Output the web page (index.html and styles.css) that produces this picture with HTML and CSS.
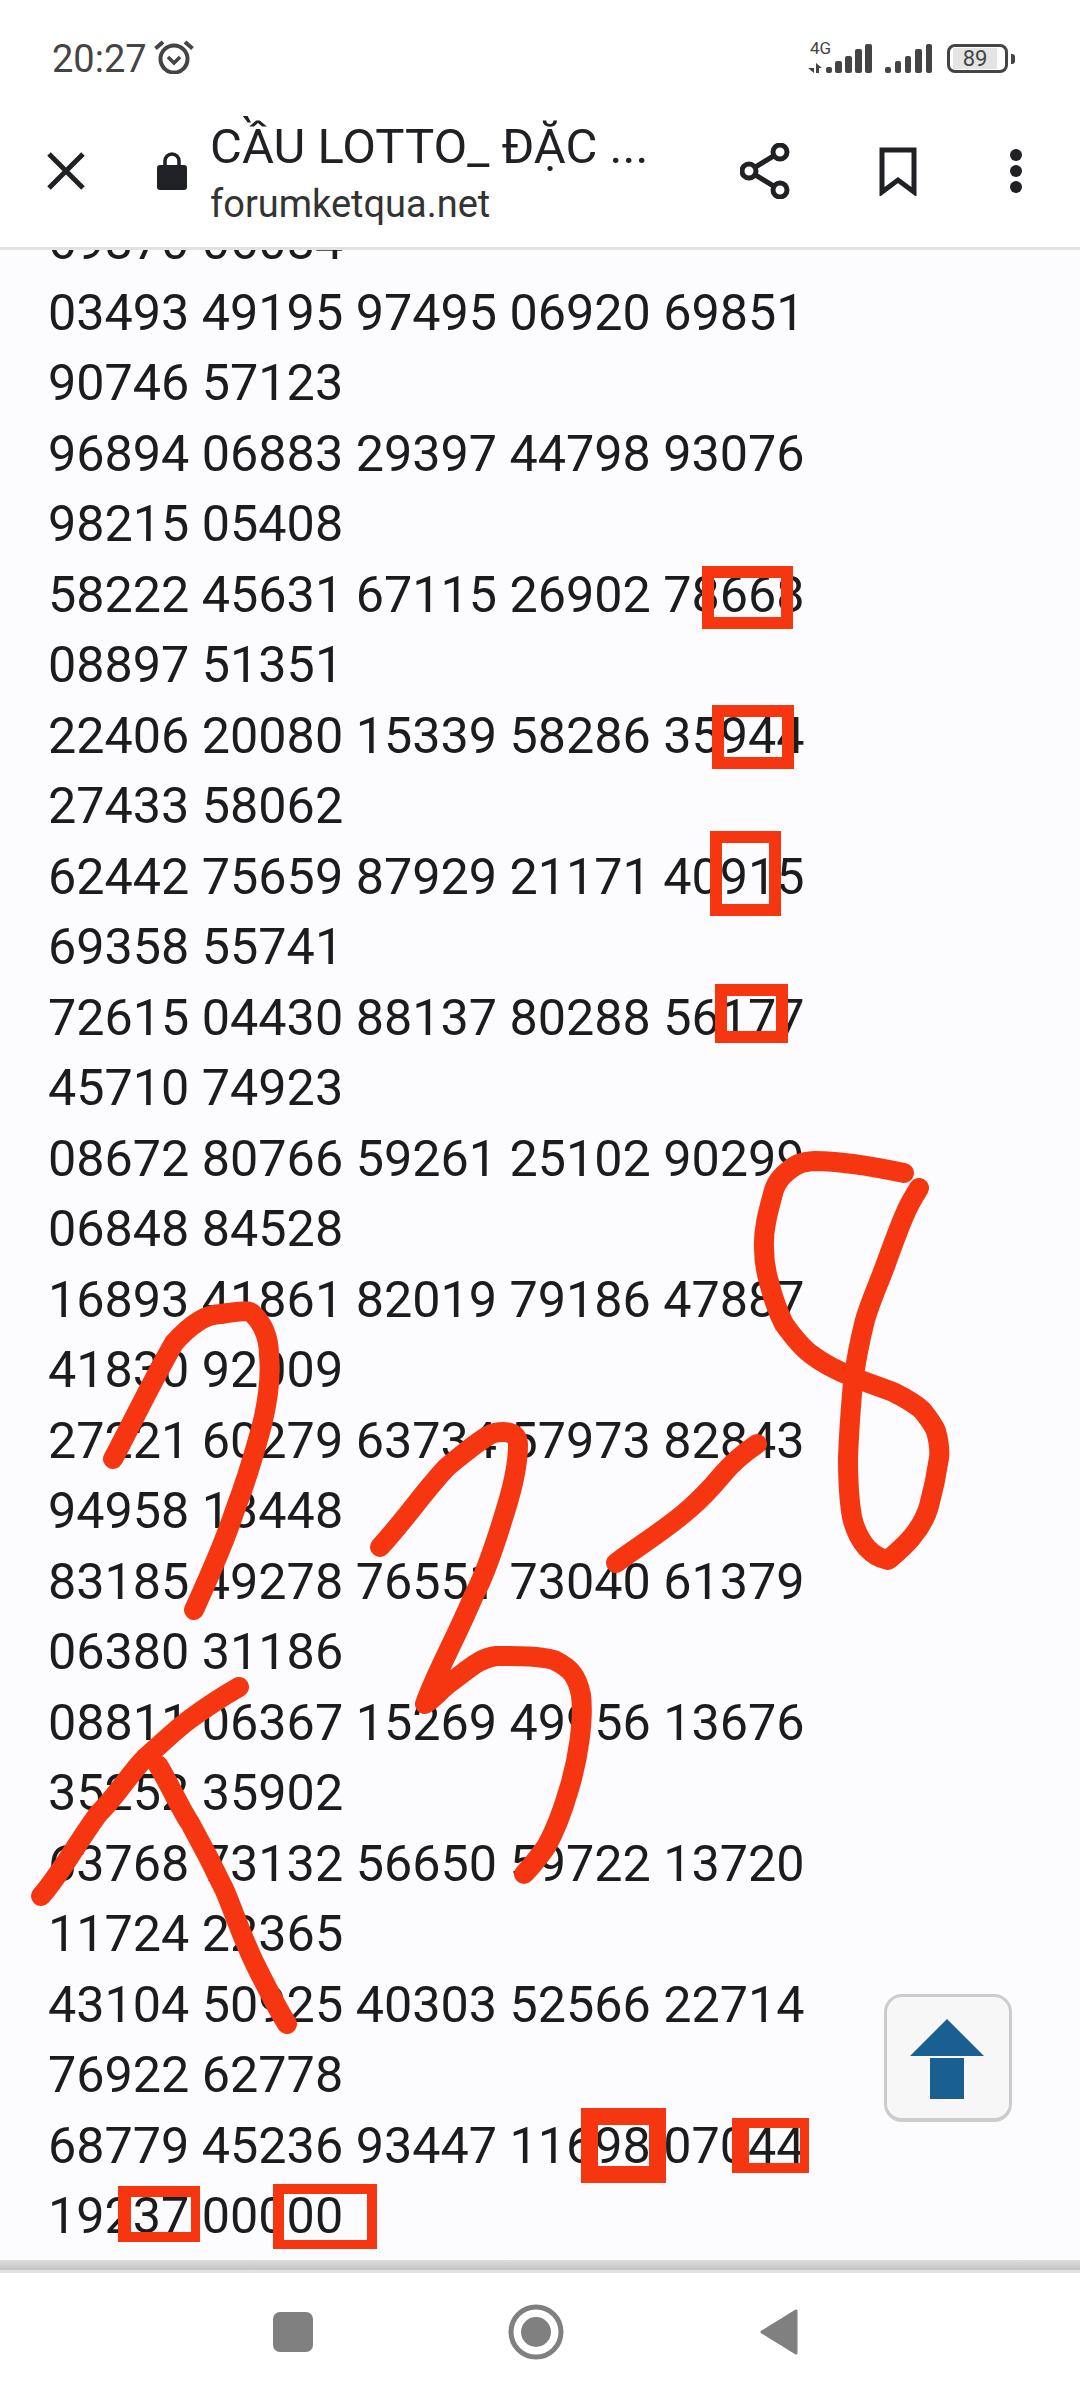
FILE: index.html
```html
<!DOCTYPE html>
<html lang="en">
<head>
  <meta charset="UTF-8" />
  <meta name="viewport" content="width=device-width, initial-scale=1.0"/>
  <title>CẦU LOTTO</title>
  <link rel="stylesheet" href="styles.css">
</head>
<body>
  <div class="phone">
    <div class="status-bar">
      <div class="status-left">
        <span class="clock">20:27</span>
        <svg class="alarm" viewBox="0 0 40 34" width="40" height="34">
          <circle cx="20" cy="19" r="13.5" fill="none" stroke="#444" stroke-width="4"/>
          <path d="M14 17l6 6 6-6" fill="none" stroke="#444" stroke-width="3.5"/>
          <path d="M1.5 8.5 9 2M38.5 8.5 31 2" fill="none" stroke="#444" stroke-width="4"/>
        </svg>
      </div>
      <div class="status-right">
        <div class="signals">
          <span class="net">4G</span>
          <svg viewBox="0 0 125 30" width="125" height="30">
            <path d="M7 20v10L1 25h6zM9 20l6 5H12v5H9z" fill="#444"/>
            <g fill="#444">
              <rect x="19" y="24" width="6" height="6" rx="2"/>
              <rect x="28" y="18" width="7" height="12" rx="2"/>
              <rect x="38" y="13" width="7" height="17" rx="2"/>
              <rect x="48" y="6" width="7" height="24" rx="2"/>
              <rect x="58" y="1" width="7" height="29" rx="2"/>
              <rect x="78" y="24" width="6" height="6" rx="2"/>
              <rect x="88" y="18" width="6" height="12" rx="2"/>
              <rect x="98" y="13" width="6" height="17" rx="2"/>
              <rect x="108" y="6" width="7" height="24" rx="2"/>
              <rect x="119" y="1" width="6" height="29" rx="2"/>
            </g>
          </svg>
        </div>
        <div class="battery"><span class="battery-level">89</span></div>
      </div>
    </div>

    <div class="toolbar">
      <svg class="close-icon" viewBox="0 0 38 38" width="38" height="38">
        <path d="M2 2 36 36M36 2 2 36" fill="none" stroke="#202124" stroke-width="5"/>
      </svg>
      <svg class="lock-icon" viewBox="0 0 30 38" width="30" height="38">
        <path d="M8 16V9a7 7 0 0 1 14 0v7" fill="none" stroke="#202124" stroke-width="3.5"/>
        <rect x="0" y="13" width="30" height="25" rx="3" fill="#202124"/>
      </svg>
      <div class="page-title">
        <div class="title">CẦU LOTTO_ ĐẶC ...</div>
        <div class="url">forumketqua.net</div>
      </div>
      <div class="toolbar-actions">
        <svg viewBox="0 0 50 56" width="50" height="56">
          <path d="M40 9 9 28 40 47" fill="none" stroke="#202124" stroke-width="5"/>
          <circle cx="40" cy="9" r="7" fill="#fff" stroke="#202124" stroke-width="5"/>
          <circle cx="9" cy="28" r="7" fill="#fff" stroke="#202124" stroke-width="5"/>
          <circle cx="40" cy="47" r="7" fill="#fff" stroke="#202124" stroke-width="5"/>
        </svg>
        <svg viewBox="0 0 38 50" width="38" height="50">
          <path d="M3 4h32v42L19 34 3 46z" fill="none" stroke="#202124" stroke-width="5"/>
        </svg>
        <svg class="menu-dots" viewBox="0 0 12 44" width="12" height="44">
          <circle cx="6" cy="6" r="6" fill="#202124"/>
          <circle cx="6" cy="22" r="6" fill="#202124"/>
          <circle cx="6" cy="38" r="6" fill="#202124"/>
        </svg>
      </div>
    </div>

    <main class="content">
      <div class="numbers">
        <div>69870 06084</div>
        <div>03493 49195 97495 06920 69851</div>
        <div>90746 57123</div>
        <div>96894 06883 29397 44798 93076</div>
        <div>98215 05408</div>
        <div>58222 45631 67115 26902 78668</div>
        <div>08897 51351</div>
        <div>22406 20080 15339 58286 35944</div>
        <div>27433 58062</div>
        <div>62442 75659 87929 21171 40915</div>
        <div>69358 55741</div>
        <div>72615 04430 88137 80288 56177</div>
        <div>45710 74923</div>
        <div>08672 80766 59261 25102 90299</div>
        <div>06848 84528</div>
        <div>16893 41861 82019 79186 47887</div>
        <div>41830 92009</div>
        <div>27221 60279 63734 57973 82843</div>
        <div>94958 13448</div>
        <div>83185 49278 76551 73040 61379</div>
        <div>06380 31186</div>
        <div>08811 06367 15269 49956 13676</div>
        <div>35252 35902</div>
        <div>63768 73132 56650 59722 13720</div>
        <div>11724 22365</div>
        <div>43104 50925 40303 52566 22714</div>
        <div>76922 62778</div>
        <div>68779 45236 93447 11698 07044</div>
        <div>19237 00000</div>
      </div>
    </main>

    <div class="nav-bar">
      <svg viewBox="0 0 40 40" width="40" height="40"><rect width="40" height="40" rx="7" fill="#808080"/></svg>
      <svg viewBox="0 0 56 56" width="56" height="56">
        <circle cx="28" cy="28" r="25" fill="none" stroke="#808080" stroke-width="5"/>
        <circle cx="28" cy="28" r="15" fill="#808080"/>
      </svg>
      <svg viewBox="0 0 40 48" width="40" height="48"><path d="M37 3v42L3 24z" fill="#808080" stroke="#808080" stroke-width="3" stroke-linejoin="round"/></svg>
    </div>

    <button class="to-top">
      <svg viewBox="0 0 74 82" width="74" height="82">
        <path d="M37 0 74 37H0z" fill="#1a5f91"/>
        <rect x="20" y="39" width="34" height="41" fill="#1a5f91"/>
      </svg>
    </button>

    <!-- pen marks on top of the screenshot -->
    <svg class="marks" viewBox="0 0 1080 2400" width="1080" height="2400">
      <g class="box-marks">
        <path fill-rule="evenodd" d="M702 566h91v63h-91zM714 578v39h67v-39z"/>
        <path fill-rule="evenodd" d="M712 705h82v64h-82zM724 717v40h58v-40z"/>
        <path fill-rule="evenodd" d="M710 831h71v85h-71zM722 843v61h47v-61z"/>
        <path fill-rule="evenodd" d="M715 984h73v59h-73zM727 996v35h49v-35z"/>
        <path fill-rule="evenodd" d="M581 2108h85v75h-85zM598 2125v41h51v-41z"/>
        <path fill-rule="evenodd" d="M732 2118h77v55h-77zM749 2128v35h51v-35z"/>
        <path fill-rule="evenodd" d="M118 2186h82v56h-82zM131 2197v35h60v-35z"/>
        <path fill-rule="evenodd" d="M273 2184h104v65h-104zM284 2194v46h83v-46z"/>
      </g>
      <g class="pen-marks">
        <path d="M113 1459C125 1437 150 1385 174 1343C190 1325 205 1314 221 1314C240 1311 250 1310 253 1314C264 1325 269 1340 269 1355C271 1375 269 1396 262 1425C255 1450 249 1474 235 1510C222 1550 205 1585 194 1610"/>
        <path d="M380 1547C405 1520 425 1490 447 1467C470 1448 485 1436 494 1433C510 1430 518 1434 518 1445C518 1465 512 1490 505 1512C495 1545 485 1575 474 1595C455 1640 435 1675 425 1704C435 1698 440 1690 451 1682C470 1668 480 1658 496 1656C520 1656 540 1656 554 1660C570 1668 577 1675 581 1695C584 1720 578 1760 569 1789C560 1820 550 1840 546 1847C538 1858 530 1868 524 1874"/>
        <path d="M239 1687C225 1695 205 1708 190 1719C175 1730 160 1745 146 1757C130 1773 115 1798 99 1813C80 1838 60 1875 41 1896"/>
        <path d="M158 1765C170 1785 180 1808 190 1823C205 1850 215 1870 225 1891C235 1915 245 1945 257 1968C268 1990 278 2010 287 2024"/>
        <path d="M904 1173C880 1168 840 1161 815 1161C800 1162 795 1165 788 1171C780 1177 776 1184 774 1190C768 1212 763 1230 764 1248C764 1262 766 1272 769 1282C773 1298 778 1312 784 1324C794 1338 802 1348 812 1355C825 1365 838 1371 853 1377C870 1384 883 1388 895 1393C905 1398 915 1404 922 1410C930 1420 934 1426 936 1431C939 1442 940 1450 939 1458C936 1478 932 1495 929 1506C925 1520 918 1530 912 1537C905 1546 895 1554 888 1560C878 1558 873 1554 867 1548C860 1540 855 1530 852 1517C849 1500 848 1480 848 1458C849 1430 851 1405 853 1382C856 1360 860 1340 865 1320C871 1300 878 1285 884 1269C892 1247 898 1230 905 1214C910 1202 915 1195 919 1188"/>
        <path d="M616 1563C640 1545 665 1530 688 1510C703 1497 712 1487 722 1475C733 1462 745 1452 757 1444"/>
      </g>
    </svg>
  </div>
</body>
</html>
```

FILE: styles.css
```css
* {
  box-sizing: border-box;
}

body {
  margin: 0;
  padding: 0;
  background: #fff;
  font-family: Roboto, sans-serif;
}

.phone {
  position: relative;
  width: 1080px;
  height: 2400px;
  display: flex;
  flex-direction: column;
  overflow: hidden;
  background: #fff;
}

/* status bar */
.status-bar {
  height: 94px;
  flex: none;
  padding: 38px 72px 0 52px;
  display: flex;
  justify-content: space-between;
  align-items: flex-start;
  color: #444;
}

.status-left {
  display: flex;
  align-items: center;
  gap: 7px;
}

.clock {
  font-size: 38px;
  line-height: 40px;
  padding-top: 1px;
}

.alarm {
  margin-top: -3px;
}

.status-right {
  display: flex;
  align-items: flex-end;
  gap: 15px;
  margin-top: 5px;
}

.signals {
  position: relative;
}

.signals svg {
  display: block;
}

.net {
  position: absolute;
  left: 3px;
  top: -4px;
  font-size: 17px;
  line-height: 18px;
}

.battery {
  position: relative;
  width: 61px;
  height: 29px;
  border: 3px solid #444;
  border-radius: 8px;
  padding: 1px 8px 1px 3px;
  text-align: center;
}

.battery::after {
  content: "";
  position: absolute;
  right: -10px;
  top: 7px;
  width: 4px;
  height: 10px;
  background: #444;
  border-radius: 0 3px 3px 0;
}

.battery-level {
  display: block;
  height: 21px;
  background: #e4e4e4;
  font-size: 22px;
  line-height: 21px;
  color: #444;
}

/* browser toolbar */
.toolbar {
  height: 156px;
  flex: none;
  padding: 0 58px 0 47px;
  display: flex;
  align-items: center;
  border-bottom: 3px solid #e2e2e2;
}

.lock-icon {
  margin-left: 72px;
}

.page-title {
  margin-left: 23px;
  margin-top: 4px;
}

.title {
  font-size: 49px;
  line-height: 54px;
  color: #202124;
  white-space: nowrap;
}

.url {
  margin-top: 8px;
  font-size: 38px;
  line-height: 44px;
  color: #333;
}

.toolbar-actions {
  display: flex;
  align-items: center;
  margin-left: auto;
  gap: 89px;
}

.menu-dots {
  margin-left: 4px;
}

/* page text */
.content {
  flex: 1;
  overflow: hidden;
  background: #fcfcfe;
  padding-left: 48px;
}

.numbers {
  margin-top: -43px;
  font-size: 50.3px;
  line-height: 70.5px;
  color: #1c1c1c;
  white-space: nowrap;
}

.to-top {
  position: absolute;
  left: 884px;
  top: 1994px;
  width: 128px;
  height: 128px;
  padding: 5px 3px 0 0;
  background: #f7f7f7;
  border: 3px solid #ccc;
  border-bottom-width: 4px;
  border-radius: 18px;
  display: flex;
  justify-content: center;
  align-items: center;
}

/* bottom navigation */
.nav-bar {
  height: 130px;
  flex: none;
  position: relative;
  background: #fff;
  border-top: 3px solid #e2e2e2;
  display: flex;
  align-items: center;
  padding: 0 281px 9px 273px;
  justify-content: space-between;
}

.nav-bar::before {
  content: "";
  position: absolute;
  left: 0;
  right: 0;
  top: -13px;
  height: 10px;
  background: linear-gradient(#dcdcdc, #c4c4c4);
}

/* overlay marks */
.marks {
  position: absolute;
  left: 0;
  top: 0;
  pointer-events: none;
}

.box-marks {
  fill: #f63511;
}

.pen-marks {
  fill: none;
  stroke: #f63511;
  stroke-width: 20;
  stroke-linecap: round;
  stroke-linejoin: round;
}
```
